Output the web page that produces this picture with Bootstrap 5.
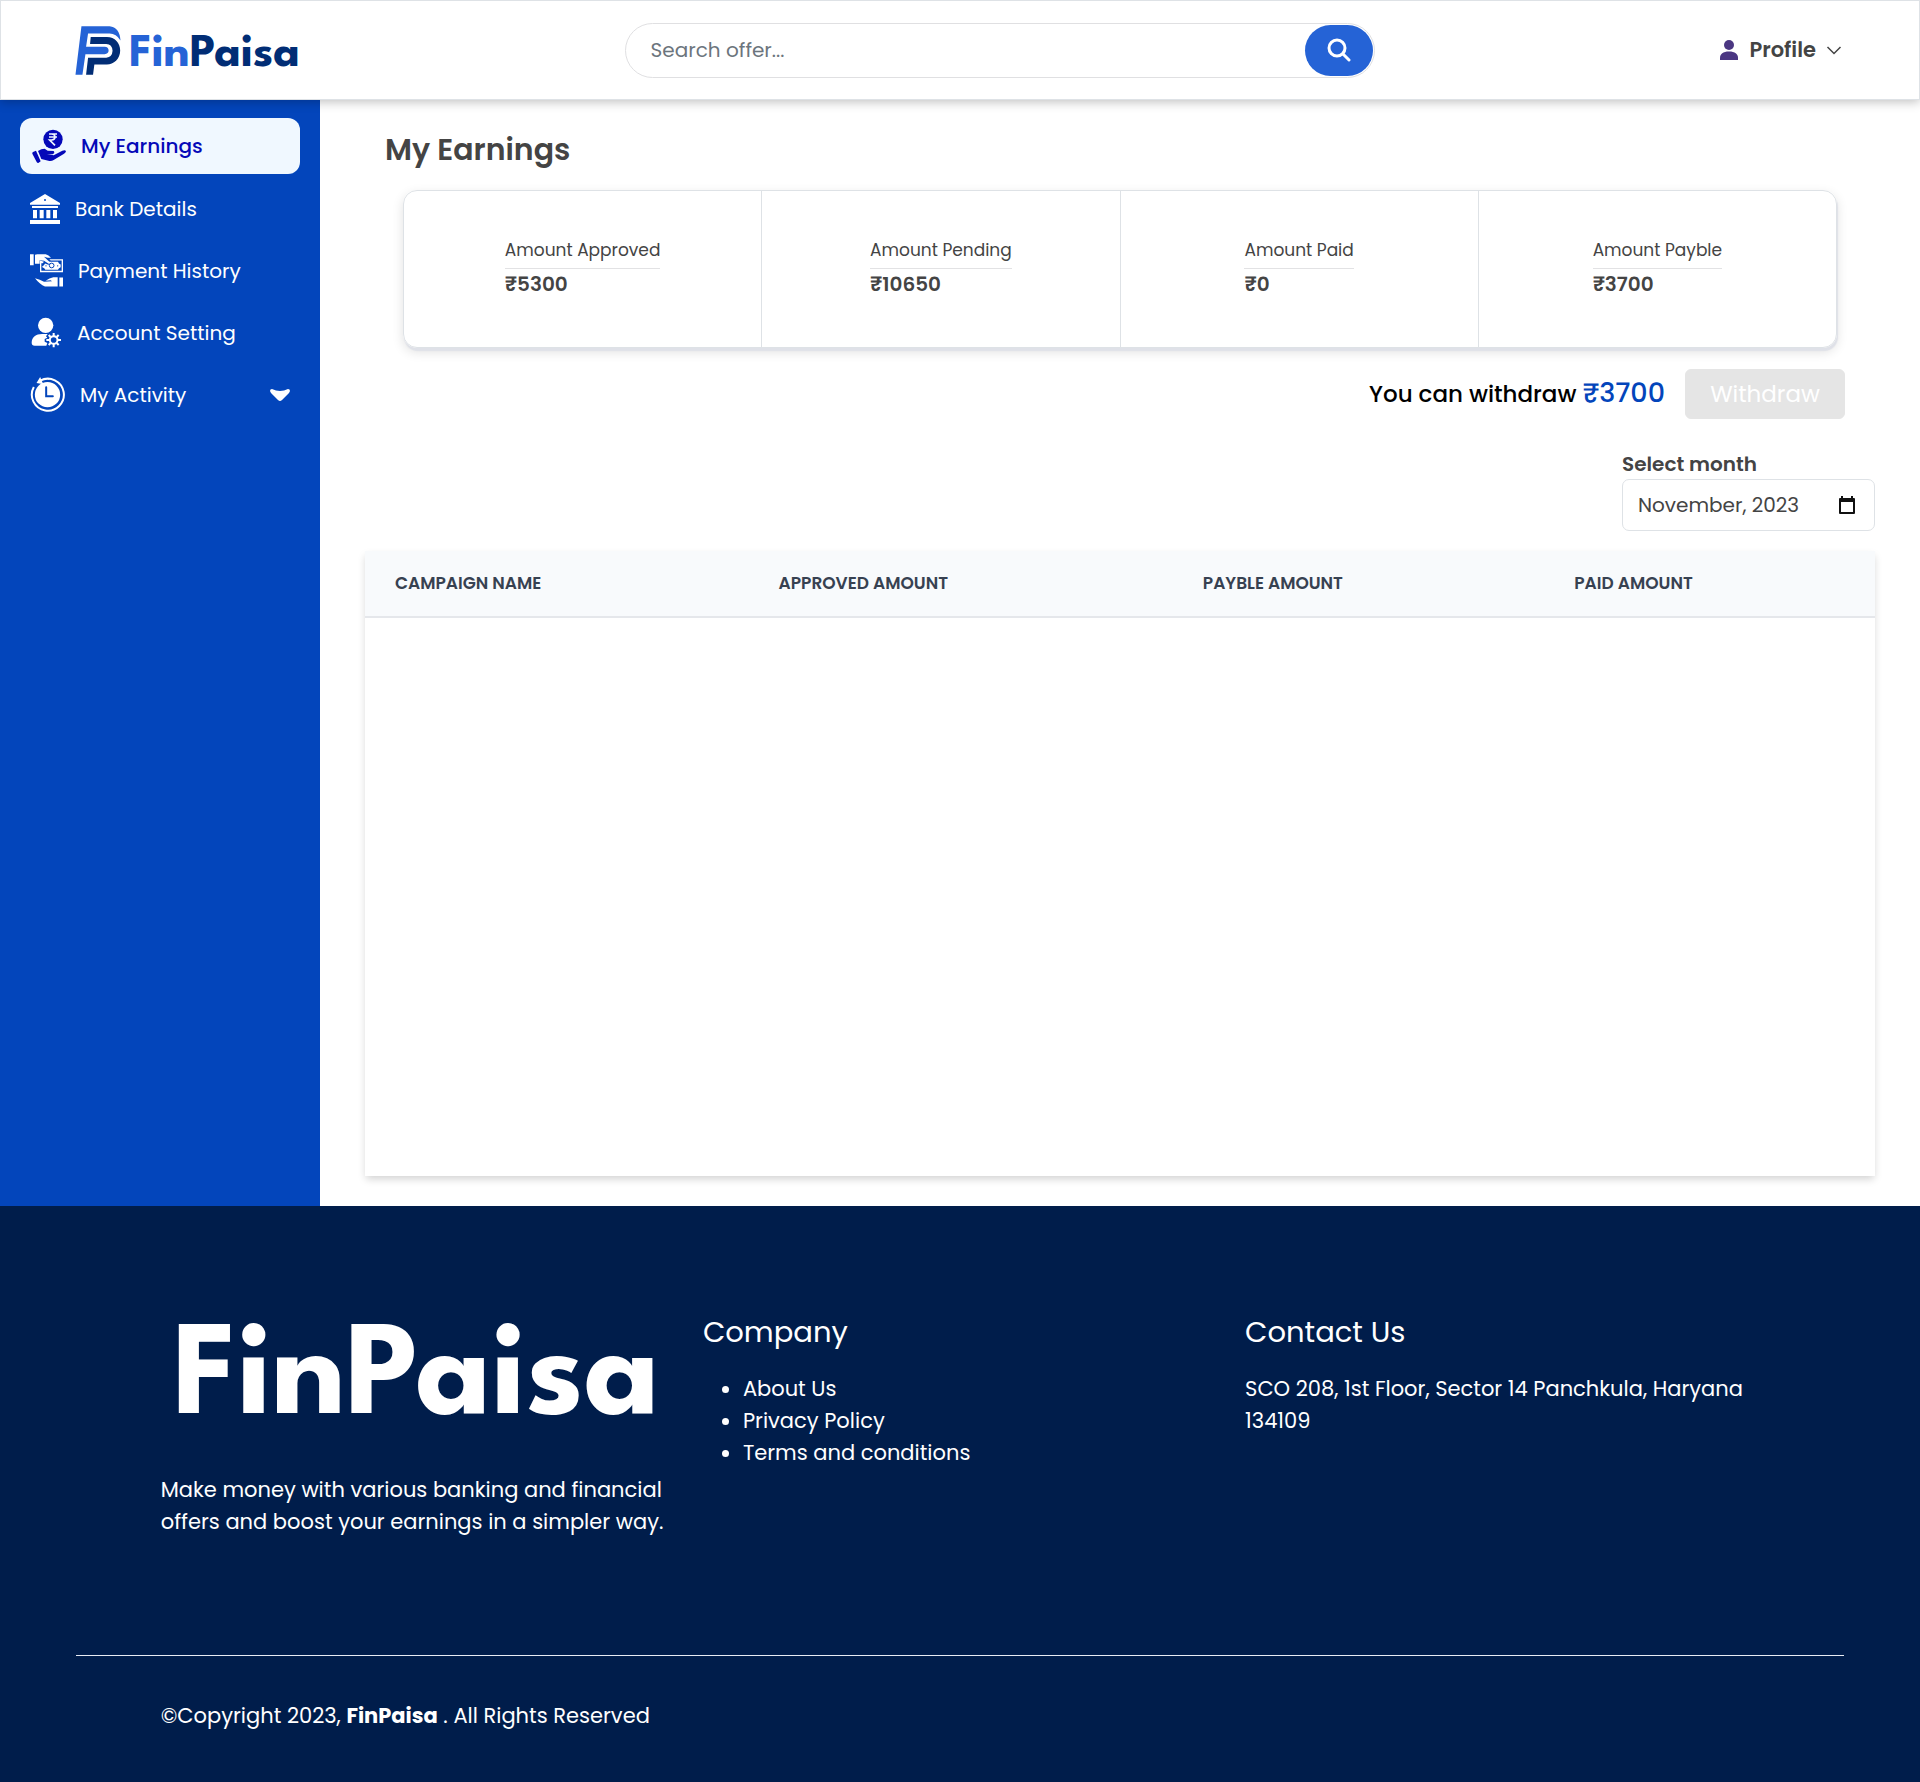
<!DOCTYPE html>
<html lang="en">
<head>
<meta charset="utf-8">
<meta name="viewport" content="width=device-width, initial-scale=1">
<title>FinPaisa - My Earnings</title>
<link href="https://cdn.jsdelivr.net/npm/bootstrap@5.3.0/dist/css/bootstrap.min.css" rel="stylesheet">
<style>
  body { font-family: Poppins, Inter, "Open Sans", sans-serif; font-size: 20px; color: #444; background: #fff; }
  .brand-text { font-family: "League Spartan", Lato, sans-serif; font-weight: 700; line-height: 1; }
  .topbar { height: 100px; padding: 0 77px 0 74px; border: 1px solid #dee2e6; box-shadow: 0 2px 10px rgba(0,0,0,.25); position: relative; z-index: 2; background: #fff; }
  .topbar .brand-text { font-size: 47px; color: #012d75; padding-top: 8px; }
  .topbar .brand-text span { color: #2563d6; }
  .search-box { width: 750px; height: 55px; margin-right: 20px; border: 1px solid #e0e0e2; border-radius: 28px; padding: 1px; }
  .search-box .form-control { border: 0; background: transparent; font-size: 20px; padding: 0 24px; box-shadow: none; }
  .search-box .form-control::placeholder { color: #6c757d; }
  .search-btn { width: 68px; flex-shrink: 0; border-radius: 26px; background: #2563d6; }
  .profile-link { color: #444; font-size: 21px; font-weight: 600; gap: 10px; }
  .sidebar { width: 320px; background: #0345bb; padding: 18px 20px; gap: 7px; }
  .side-link { height: 55px; padding: 0 10px; gap: 15px; color: #fff; border-radius: 12px; text-decoration: none; }
  .side-link.current { height: 56px; padding-left: 12px; background: #f0f8ff; color: #0509b8; font-weight: 500; }
  .page-title { font-size: 30px; line-height: 36px; font-weight: 600; margin: 0 0 22px 20px; }
  .content-area { padding: 32px 45px 30px; min-height: 1106px; }
  .stat-panel { margin: 0 38px; border: 1px solid #dee2e6; border-radius: 14px; box-shadow: 1px 3px 1px #dfe1e8, 0 4px 12px rgba(0,0,0,.12); height: 158px; }
  .stat-cell + .stat-cell { border-left: 1px solid #dee2e6; }
  .stat-name { font-size: 17px; line-height: 30px; padding-bottom: 3px; border-bottom: 1px solid #e2e2e4; }
  .stat-value { font-weight: 600; line-height: 30px; }
  .withdraw-row { margin: 21px 30px 0 0; gap: 20px; color: #000; font-size: 23px; font-weight: 500; }
  .withdraw-row > div { padding-bottom: 2px; }
  .withdraw-row strong { font-size: 27px; line-height: 36px; font-weight: 500; color: #0345bb; }
  .withdraw-btn { width: 160px; height: 50px; font-size: 23px; line-height: 24px; border-radius: 6px; }
  .withdraw-btn:disabled { background: #e5e5e5; color: #fff; opacity: 1; border-color: #e5e5e5; }
  .month-field { width: 253px; margin-top: 30px; }
  .month-field label { font-weight: 600; line-height: 30px; }
  .month-box { height: 52px; border: 1px solid #dee2e6; border-radius: 7px; padding: 0 18px 0 15px; }
  .month-box input { font-size: 20px; color: #444; padding: 0; }
  .campaigns { margin-top: 20px; box-shadow: 0 4px 8px -1px rgba(0,0,0,.18); flex: 1; }
  .campaigns th { background: #f8fafc; color: #374151; font-size: 17px; font-weight: 600; line-height: 25px; padding: 20px 30px; border-bottom: 2px solid #e5e7eb; }
  .site-footer { background: #001d4b; color: #fff; font-size: 21px; line-height: 32px; padding: 104px 76px 50px; }
  .site-footer a { color: #fff; text-decoration: none; }
  .footer-cols, .copyright { padding: 0 4%; }
  .footer-cols > div > div { padding: 0 14px; }
  .footer-logo { font-size: 134px; padding: 4px 0 0 12px; margin-bottom: 26px; }
  .site-footer h2 { font-size: 29px; line-height: 44px; font-weight: 400; margin: 0 0 19px; }
  .site-footer ul { padding-left: 40px; }
  .footer-rule { border-top: 1px solid #e8ecf4; margin: 117px 0 44px; }
  .copyright p { padding: 0 14px; margin: 0; }
</style>
</head>
<body>
<header class="topbar d-flex align-items-center justify-content-between">
  <a href="#" class="d-flex align-items-center text-decoration-none gap-2">
    <svg width="46" height="49" viewBox="44 74 138 148" aria-hidden="true">
      <path fill="#2563d6" d="M63 75H148Q178 78 181 118Q168 97 148 97H83L77 137H133Q145 138 145 148T133 159H75L66 221H45Z"/>
      <path fill="#012d75" d="M91 107H140C164 107 180 125 180 148C180 174 160 190 140 190H102L98 221H77L83 170H138Q156 168 157 149Q156 128 138 128H89Z"/>
    </svg>
    <span class="brand-text"><span>Fin</span>Paisa</span>
  </a>
  <form class="search-box d-flex" role="search">
    <input type="search" class="form-control" placeholder="Search offer..." aria-label="Search offer">
    <button type="button" class="search-btn btn border-0 p-0" aria-label="Search">
      <svg width="24" height="24" viewBox="0 0 24 24" fill="none" stroke="#fff" stroke-width="3" stroke-linecap="round"><circle cx="10" cy="10" r="8"/><path d="M16 16l6 6"/></svg>
    </button>
  </form>
  <a href="#" class="profile-link d-flex align-items-center text-decoration-none">
    <svg width="20" height="20" viewBox="0 0 20 20" fill="#4b3782" aria-hidden="true"><circle cx="10" cy="5" r="5"/><path d="M1 20V18C1 14 4 11.500 10 11.500S19 14 19 18V20Z"/></svg>
    <span>Profile</span>
    <svg width="16" height="16" viewBox="0 0 16 16" fill="none" stroke="#444" stroke-width="1.500" aria-hidden="true"><path d="M1.500 5L8 11.500L14.500 5"/></svg>
  </a>
</header>

<div class="d-flex">
  <nav class="sidebar d-flex flex-column flex-shrink-0" aria-label="Account">
    <a href="#" class="side-link current d-flex align-items-center" aria-current="page">
      <svg width="34" height="34" viewBox="93 84 102 102" aria-hidden="true"><circle cx="156" cy="115" r="29" fill="#0509b8"/><path fill="none" stroke="#f0f8ff" stroke-width="5" d="M144 99H168M144 108H168M144 99H152C165 99 165 117 152 117H146L162 133"/><path fill="#0509b8" d="M94 158Q93 155 96 153L105 149L119 181L112 186Q108 186 107 183ZM111 150Q121 143 131 143L140 149L158 150Q163 156 155 160L138 159L158 163L184 149Q193 145 195 151Q194 156 188 159L158 177Q152 181 145 180L121 174Z"/></svg>
      My Earnings
    </a>
    <a href="#" class="side-link d-flex align-items-center">
      <svg width="30" height="30" viewBox="90 282 90 90" fill="#fff" aria-hidden="true"><path d="M90 314V309L135 282L180 309V314ZM96 318H174V324H96ZM99 330H111V355H99ZM119 330H131V355H119ZM139 330H151V355H139ZM159 330H171V355H159ZM90 360H180V372H90Z"/><circle cx="135" cy="300" r="3" fill="#0345bb"/></svg>
      Bank Details
    </a>
    <a href="#" class="side-link d-flex align-items-center">
      <svg width="33" height="33" viewBox="90 461 99 98" fill="#fff" aria-hidden="true"><path d="M90 461H101V494H90ZM105 463L112 461H137Q146 463 153 472H143L132 469L153 488L146 490L132 481L119 479L119 490L105 490Z"/><path fill-rule="evenodd" d="M120 480L132 484L128 488H124V511H185V480H152L148 476H189V515H120Z"/><path fill-rule="evenodd" d="M127 497Q133 495 135 489L145 493L150 491L146 484H174Q176 490 182 492V500Q176 502 174 508H136Q134 502 127 500Z"/><circle cx="155" cy="495" r="7" fill="none" stroke="#0345bb" stroke-width="3"/><circle cx="138" cy="496" r="2" fill="#0345bb"/><circle cx="173" cy="496" r="2" fill="#0345bb"/><path d="M105 533Q120 536 132 544L156 542L152 539L137 541Q148 532 160 530H173V558H135Q119 551 105 533ZM178 531H189V558H178Z"/></svg>
      Payment History
    </a>
    <a href="#" class="side-link d-flex align-items-center">
      <svg width="32" height="32" viewBox="90 650 96 96" fill="#fff" aria-hidden="true"><circle cx="137" cy="675" r="23"/><path d="M95 727C95 710 108 701 126 701H143L138 708L142 712L134 716V724L142 728L139 736H104Q95 736 95 727Z"/><circle cx="161" cy="719" r="11.500" fill="none" stroke="#fff" stroke-width="6"/><path fill="none" stroke="#fff" stroke-width="6" d="M161 698V707M161 731V741M139 719H148M174 719H183M146 704L152 710M170 728L176 734M176 704L170 710M146 734L152 728"/></svg>
      Account Setting
    </a>
    <a href="#" class="side-link d-flex align-items-center">
      <svg width="35" height="35" viewBox="90 837 104 105" fill="#fff" aria-hidden="true"><circle cx="142" cy="890" r="38"/><path fill="none" stroke="#fff" stroke-width="6" d="M101 867A48 48 0 1 0 120 848Q135 841 148 843"/><path d="M120 837L109 855L130 859L126 851Z"/><path fill="none" stroke="#0345bb" stroke-width="6" stroke-linecap="round" d="M138 868V895H158"/></svg>
      My Activity
      <svg class="ms-auto" width="20" height="12" viewBox="0 0 20 12" fill="#fff" aria-hidden="true"><path d="M0 2Q0 0 2 0Q10 4 18 0Q20 0 20 2L19 4L12 11Q10 13 8 11L1 4Z"/></svg>
    </a>
  </nav>

  <main class="content-area flex-grow-1 d-flex flex-column">
    <h1 class="page-title">My Earnings</h1>
    <section class="stat-panel row g-0">
      <div class="stat-cell col d-flex align-items-center justify-content-center pb-1"><div><div class="stat-name">Amount Approved</div><div class="stat-value">₹5300</div></div></div>
      <div class="stat-cell col d-flex align-items-center justify-content-center pb-1"><div><div class="stat-name">Amount Pending</div><div class="stat-value">₹10650</div></div></div>
      <div class="stat-cell col d-flex align-items-center justify-content-center pb-1"><div><div class="stat-name">Amount Paid</div><div class="stat-value">₹0</div></div></div>
      <div class="stat-cell col d-flex align-items-center justify-content-center pb-1"><div><div class="stat-name">Amount Payble</div><div class="stat-value">₹3700</div></div></div>
    </section>
    <div class="withdraw-row d-flex justify-content-end align-items-center">
      <div>You can withdraw <strong>₹3700</strong></div>
      <button type="button" class="withdraw-btn btn p-0" disabled>Withdraw</button>
    </div>
    <div class="month-field align-self-end">
      <label for="month" class="d-block">Select month</label>
      <div class="month-box d-flex align-items-center">
        <input id="month" type="text" class="form-control border-0 shadow-none" value="November, 2023">
        <svg width="18" height="18" viewBox="0 0 18 18" class="flex-shrink-0" aria-hidden="true"><path fill="#111" fill-rule="evenodd" d="M3 0H5V2H13V0H15V2H16Q17 2 17 3V17Q17 18 16 18H2Q1 18 1 17V3Q1 2 2 2H3ZM3 6V16H15V6Z"/></svg>
      </div>
    </div>
    <section class="campaigns">
      <table class="w-100">
        <colgroup><col style="width:25.4%"><col style="width:28.1%"><col style="width:24.6%"><col style="width:21.9%"></colgroup>
        <thead><tr><th scope="col">CAMPAIGN NAME</th><th scope="col">APPROVED AMOUNT</th><th scope="col">PAYBLE AMOUNT</th><th scope="col">PAID AMOUNT</th></tr></thead>
        <tbody></tbody>
      </table>
    </section>
  </main>
</div>

<footer class="site-footer">
  <div class="footer-cols">
    <div class="row g-0">
      <div class="col-4">
        <div class="footer-logo brand-text">FinPaisa</div>
        <p class="m-0">Make money with various banking and financial offers and boost your earnings in a simpler way.</p>
      </div>
      <div class="col-4">
        <h2>Company</h2>
        <ul class="m-0">
          <li><a href="#">About Us</a></li>
          <li><a href="#">Privacy Policy</a></li>
          <li><a href="#">Terms and conditions</a></li>
        </ul>
      </div>
      <div class="col-4">
        <h2>Contact Us</h2>
        <p class="m-0">SCO 208, 1st Floor, Sector 14 Panchkula, Haryana 134109</p>
      </div>
    </div>
  </div>
  <div class="footer-rule"></div>
  <div class="copyright"><p>©Copyright 2023, <b>FinPaisa</b> . All Rights Reserved</p></div>
</footer>
<script src="https://cdn.jsdelivr.net/npm/bootstrap@5.3.0/dist/js/bootstrap.bundle.min.js"></script>
</body>
</html>
